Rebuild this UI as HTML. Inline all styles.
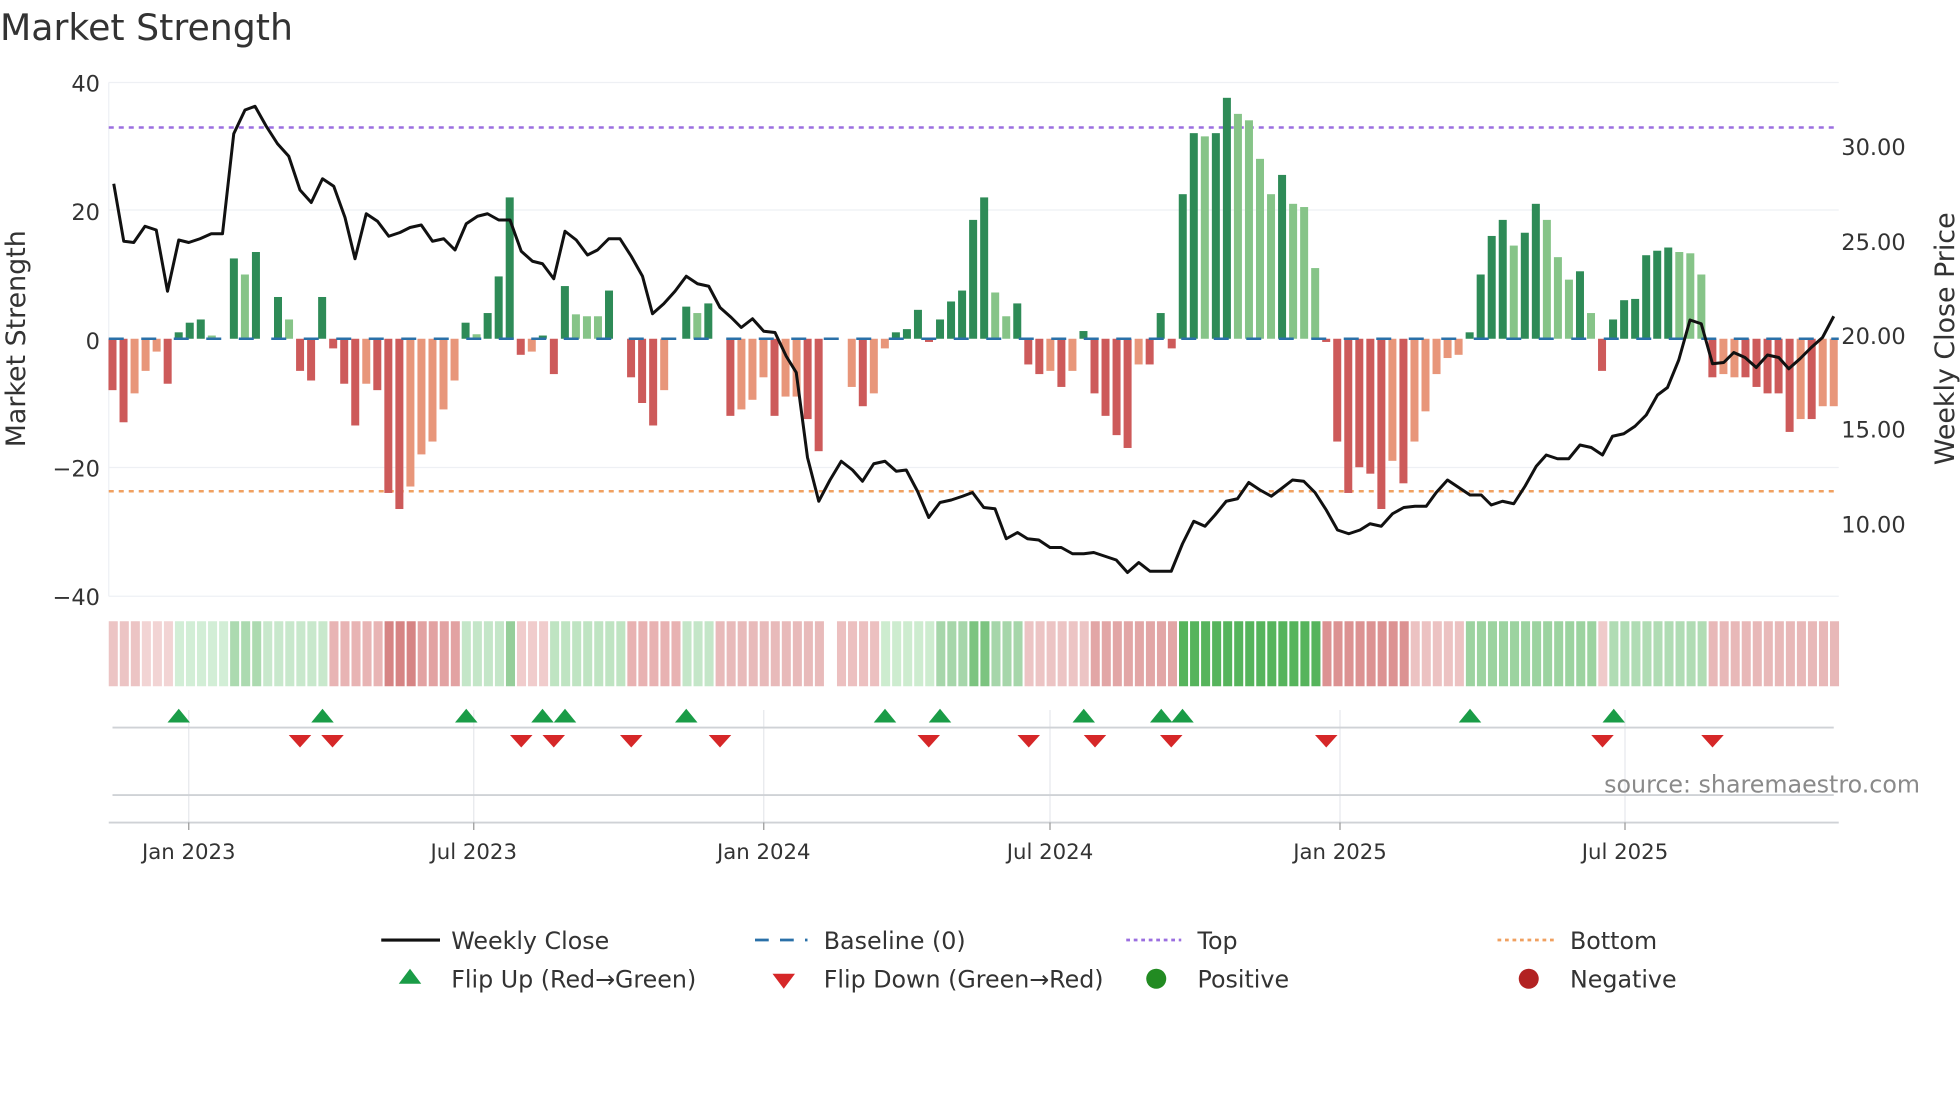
<!DOCTYPE html>
<html><head><meta charset="utf-8"><style>
html,body{margin:0;padding:0;background:#fff;width:1960px;height:1102px;overflow:hidden}
svg text{font-family:"DejaVu Sans","Liberation Sans",sans-serif;fill:#333}
</style></head><body>
<svg id="s" width="1960" height="1102" viewBox="0 0 1568 881.6" xmlns="http://www.w3.org/2000/svg">
<text x="0" y="32" font-size="29">Market Strength</text>
<g stroke="#eef0f4" stroke-width="1">
<line x1="87" y1="66" x2="1471" y2="66"/><line x1="87" y1="168" x2="1471" y2="168"/>
<line x1="87" y1="374" x2="1471" y2="374"/><line x1="87" y1="477" x2="1471" y2="477"/>
<line x1="87" y1="66" x2="87" y2="477"/>
</g>
<g font-size="18" text-anchor="end">
<text x="80" y="73">40</text><text x="80" y="176">20</text><text x="80" y="279">0</text>
<text x="80" y="381">−20</text><text x="80" y="484">−40</text>
</g>
<g font-size="18">
<text x="1473" y="124">30.00</text><text x="1473" y="200">25.00</text><text x="1473" y="275">20.00</text>
<text x="1473" y="350">15.00</text><text x="1473" y="426">10.00</text>
</g>
<text transform="translate(20,271) rotate(-90)" font-size="21.5" text-anchor="middle">Market Strength</text>
<text transform="translate(1563,271) rotate(-90)" font-size="21.5" text-anchor="middle">Weekly Close Price</text>
<line x1="87" y1="102" x2="1471" y2="102" stroke="#9b6fe0" stroke-width="2" stroke-dasharray="4,4"/>
<line x1="87" y1="393" x2="1471" y2="393" stroke="#f0a060" stroke-width="2" stroke-dasharray="4,4"/>
<g id="bars"></g>
<line x1="87" y1="271" x2="1471" y2="271" stroke="#2a70a8" stroke-width="2" stroke-dasharray="12,14"/>
<polyline id="price" fill="none" stroke="#111" stroke-width="2.4" stroke-linejoin="round"/>
<g id="heat"></g>
<g stroke="#e6e8ec" stroke-width="1">
<line x1="151" y1="568" x2="151" y2="658"/><line x1="379" y1="568" x2="379" y2="658"/>
<line x1="611" y1="568" x2="611" y2="658"/><line x1="840" y1="568" x2="840" y2="658"/>
<line x1="1072" y1="568" x2="1072" y2="658"/><line x1="1300" y1="568" x2="1300" y2="658"/>
</g>
<line x1="90" y1="582" x2="1467" y2="582" stroke="#cfd2d6" stroke-width="1.5"/>
<line x1="90" y1="636" x2="1467" y2="636" stroke="#cfd2d6" stroke-width="1.5"/>
<line x1="87" y1="658" x2="1471" y2="658" stroke="#cfd2d6" stroke-width="1.5"/>
<g stroke="#999" stroke-width="1">
<line x1="151" y1="658" x2="151" y2="664"/><line x1="379" y1="658" x2="379" y2="664"/>
<line x1="611" y1="658" x2="611" y2="664"/><line x1="840" y1="658" x2="840" y2="664"/>
<line x1="1072" y1="658" x2="1072" y2="664"/><line x1="1300" y1="658" x2="1300" y2="664"/>
</g>
<g id="flips"></g>
<text x="1536" y="634" font-size="19" text-anchor="end" style="fill:#8a8a8a">source: sharemaestro.com</text>
<g font-size="17" text-anchor="middle">
<text x="151" y="687">Jan 2023</text><text x="379" y="687">Jul 2023</text><text x="611" y="687">Jan 2024</text>
<text x="840" y="687">Jul 2024</text><text x="1072" y="687">Jan 2025</text><text x="1300" y="687">Jul 2025</text>
</g>
<g font-size="19">
<line x1="305" y1="752" x2="352" y2="752" stroke="#111" stroke-width="2.5"/><text x="361" y="759">Weekly Close</text>
<line x1="604" y1="752" x2="646" y2="752" stroke="#2a70a8" stroke-width="2.2" stroke-dasharray="11,9"/><text x="659" y="759">Baseline (0)</text>
<line x1="901" y1="752" x2="945" y2="752" stroke="#9b6fe0" stroke-width="2.2" stroke-dasharray="3,3"/><text x="958" y="759">Top</text>
<line x1="1198" y1="752" x2="1243" y2="752" stroke="#f0a060" stroke-width="2.2" stroke-dasharray="3,3"/><text x="1256" y="759">Bottom</text>
<polygon points="319,787 337,787 328,775" fill="#1a9c47"/><text x="361" y="790">Flip Up (Red→Green)</text>
<polygon points="618,779 636,779 627,791" fill="#d62728"/><text x="659" y="790">Flip Down (Green→Red)</text>
<circle cx="925" cy="783" r="8" fill="#228b22"/><text x="958" y="790">Positive</text>
<circle cx="1223" cy="783" r="8" fill="#b22222"/><text x="1256" y="790">Negative</text>
</g>
</svg>
<script>
var NS="http://www.w3.org/2000/svg";
function el(t,a,p){var e=document.createElementNS(NS,t);for(var k in a)e.setAttribute(k,a[k]);p.appendChild(e);return e;}
var B="r-8 r-13 o-8.5 o-5 o-2 r-7 g1 g2.5 g3 l0.5 n0 g12.5 l10 g13.5 n0 g6.5 l3 r-5 r-6.5 g6.5 r-1.5 r-7 r-13.5 o-7 r-8 r-24 r-26.5 o-23 o-18 o-16 o-11 o-6.5 g2.5 l0.7 g4 g9.7 g22 r-2.5 o-2 g0.5 r-5.5 g8.2 l3.8 l3.5 l3.5 g7.5 n0 r-6 r-10 r-13.5 o-8 n0 g5 l4 g5.5 n0 r-12 o-11 o-9.5 o-6 r-12 o-9 o-9 r-12.5 r-17.5 n0 n0 o-7.5 r-10.5 o-8.5 o-1.5 g1 g1.5 g4.5 r-0.5 g3 g5.8 g7.5 g18.5 g22 l7.2 l3.5 g5.5 r-4 r-5.5 o-5 r-7.5 o-5 g1.2 r-8.5 r-12 r-15 r-17 o-4 r-4 g4 r-1.5 g22.5 g32 l31.5 g32 g37.5 l35 l34 l28 l22.5 g25.5 l21 l20.5 l11 r-0.5 r-16 r-24 r-20 r-21 r-26.5 o-19 r-22.5 o-16 o-11.3 o-5.5 o-3 o-2.5 g1 g10 g16 g18.5 l14.5 g16.5 g21 l18.5 l12.7 l9.2 g10.5 l4 r-5 g3 g6 g6.2 g13 g13.7 g14.2 l13.5 l13.3 l10 r-6 o-5.5 o-6 r-6 r-7.5 r-8.5 r-8.5 r-14.5 o-12.5 r-12.5 o-10.5 o-10.5".split(" ");
var C={r:"#cd5a5a",o:"#e8967a",g:"#2e8b57",l:"#86c488"};
var bg=document.getElementById("bars"),n=B.length,st=(1467-90)/(n-1);
B.forEach(function(s,i){var c=s[0],v=parseFloat(s.slice(1));if(c=="n"||!v)return;var x=90+i*st,h=Math.abs(v)*5.14;
el("rect",{x:x-3.2,y:v>0?271-h:271,width:6.4,height:h,fill:C[c]},bg);});
var P=[91,147,99,193,107,194,116,181,125,184,134,233,143,192,151,194,160,191,169,187,178,187,187,107,196,88,204,85,213,101,222,115,231,125,240,152,249,162,258,143,267,149,276,174,284,207,293,171,302,177,311,189,320,186,328,182,337,180,346,193,355,191,364,200,373,179,382,173,390,171,399,176,408,176,417,201,426,209,434,211,443,223,452,185,461,192,470,204,478,200,487,191,496,191,505,205,514,221,522,251,531,243,540,233,549,221,558,227,567,229,576,246,585,254,593,262,602,255,611,265,620,266,629,285,637,298,646,366,655,401,664,384,673,369,682,376,690,385,699,371,708,369,717,377,725,376,734,393,743,414,752,402,761,400,770,397,778,394,787,406,796,407,805,431,814,426,822,431,831,432,840,438,849,438,858,443,867,443,875,442,884,445,893,448,902,458,911,450,920,457,929,457,937,457,946,435,955,417,964,421,972,412,981,401,990,399,999,386,1008,392,1017,397,1025,391,1034,384,1043,385,1052,394,1061,408,1070,424,1079,427,1088,424,1096,419,1105,421,1114,411,1123,406,1132,405,1141,405,1149,394,1158,384,1167,390,1176,396,1185,396,1193,404,1202,401,1211,403,1220,389,1229,373,1237,364,1246,367,1255,367,1264,356,1273,358,1282,364,1290,349,1299,347,1308,341,1317,332,1326,316,1334,310,1343,288,1352,256,1361,259,1370,291,1379,290,1387,282,1396,286,1405,294,1414,284,1423,286,1431,295,1440,287,1449,278,1458,270,1467,253];
var pts=[];for(var i=0;i<P.length;i+=2)pts.push(P[i]+","+P[i+1]);document.getElementById("price").setAttribute("points",pts.join(" "));
var S=[[87,110,"#ecc4c4"],[110,138,"#f2d4d4"],[138,182,"#d2eed6"],[182,210,"#acdab0"],[210,262,"#c8e8cc"],[262,305,"#e8b4b4"],[305,330,"#d68484"],[330,368,"#e2a2a2"],[368,400,"#c4e6c8"],[400,412,"#96ce9a"],[412,440,"#f0cccc"],[440,500,"#bfe4c2"],[500,545,"#e8b2b2"],[545,570,"#c4e6c8"],[570,658,"#e8baba"],[658,668,"#ffffff"],[668,705,"#ecc0c0"],[705,748,"#cdeccf"],[748,775,"#a6d6aa"],[775,792,"#7cc480"],[792,820,"#a6d6aa"],[820,870,"#ecc4c4"],[870,940,"#e2a6a6"],[940,1058,"#56b45c"],[1058,1130,"#dc9292"],[1130,1172,"#ecc2c2"],[1172,1280,"#9cd3a0"],[1280,1288,"#efcaca"],[1288,1365,"#b0dcb4"],[1365,1471,"#e8b8b8"]];
var hg=document.getElementById("heat");
for(var x=87;x<1469;x+=st){var col="#fff";S.forEach(function(s){if(x+3>=s[0]&&x+3<s[1])col=s[2];});el("rect",{x:x,y:497,width:st-1.6,height:52,fill:col},hg);}
var fg=document.getElementById("flips");
[143,258,373,434,452,549,708,752,867,929,946,1176,1291].forEach(function(x){el("polygon",{points:(x-9)+",578 "+(x+9)+",578 "+x+",567",fill:"#1a9c47"},fg);});
[240,266,417,443,505,576,743,823,876,937,1061,1282,1370].forEach(function(x){el("polygon",{points:(x-9)+",588 "+(x+9)+",588 "+x+",598",fill:"#d62728"},fg);});
</script>
</body></html>
